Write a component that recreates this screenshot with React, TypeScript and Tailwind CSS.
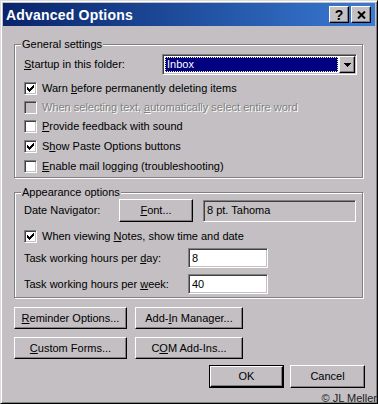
import React from "react";

const Check = () => (
  <svg width="7" height="7" viewBox="0 0 7 7" shapeRendering="crispEdges">
    {[2, 3, 4, 3, 2, 1, 0].map((y, x) => (
      <rect key={x} x={x} y={y} width="1" height="3" fill="#000" />
    ))}
  </svg>
);

const Box = ({ checked, disabled }: { checked?: boolean; disabled?: boolean }) => (
  <div
    className={`w-[13px] h-[13px] shrink-0 flex items-center justify-center border border-t-[#808080] border-l-[#808080] border-r-white border-b-white shadow-[inset_1px_1px_0_#404040,inset_-1px_-1px_0_#c3bfc3] ${
      disabled ? "bg-[#c3bfc3]" : "bg-white"
    }`}
  >
    {checked && <Check />}
  </div>
);

const CheckRow = ({
  checked,
  disabled,
  className,
  children,
}: {
  checked?: boolean;
  disabled?: boolean;
  className: string;
  children: React.ReactNode;
}) => (
  <div className={`flex items-center ${className}`}>
    <Box checked={checked} disabled={disabled} />
    <span
      className={`ml-[5px] whitespace-nowrap ${
        disabled ? "text-[#808080] [text-shadow:1px_1px_0_#fff]" : ""
      }`}
    >
      {children}
    </span>
  </div>
);

const Btn = ({ className, children }: { className: string; children: React.ReactNode }) => (
  <div
    className={`flex items-center justify-center whitespace-nowrap border border-t-white border-l-white border-r-black border-b-black shadow-[inset_-1px_-1px_0_#808080] ${className}`}
  >
    {children}
  </div>
);

const Sunken = ({ className, children }: { className: string; children?: React.ReactNode }) => (
  <div
    className={`flex items-center border border-t-[#808080] border-l-[#808080] border-r-white border-b-white shadow-[inset_1px_1px_0_#404040,inset_-1px_-1px_0_#c3bfc3] ${className}`}
  >
    {children}
  </div>
);

export default function App() {
  return (
    <div className="w-[378px] h-[404px] overflow-hidden bg-[#c3bfc3] font-['Liberation_Sans',Arial,sans-serif] text-[11px] leading-[13px] text-black">
      <div className="h-full border border-t-[#dcdcdc] border-l-[#dcdcdc] border-r-black border-b-black shadow-[inset_1px_1px_0_#fff,inset_-1px_-1px_0_#808080] p-[2px] flex flex-col">
        {/* Title bar */}
        <div className="h-[23px] shrink-0 flex items-center bg-linear-to-r from-[#0a246a] to-[#3a7bd5] pl-[3px] pr-[4px]">
          <span className="text-white font-bold text-[14px] leading-[16px] tracking-[0.2px]">Advanced Options</span>
          <div className="ml-auto flex gap-[2px]">
            <Btn className="w-[20px] h-[17px] bg-[#c3bfc3]">
              <span className="font-bold text-[14px] leading-[14px]">?</span>
            </Btn>
            <Btn className="w-[20px] h-[17px] bg-[#c3bfc3]">
              <svg width="9" height="8" viewBox="0 0 9 8">
                <path d="M1 0.5 L8 7.5 M8 0.5 L1 7.5" stroke="#000" strokeWidth="2" />
              </svg>
            </Btn>
          </div>
        </div>

        {/* Body */}
        <div className="flex-1 flex flex-col pl-[11px] pr-[10px]">
          {/* General settings */}
          <div className="mt-[18px] w-[349px] h-[134px] shrink-0 flex flex-col pl-[9px] border border-[#808080] shadow-[inset_1px_1px_0_#fff,1px_1px_0_#fff]">
            <span className="self-start -mt-[7px] -ml-[3px] px-[1px] h-[13px] bg-[#c3bfc3]">General settings</span>
            <div className="mt-[3px] h-[21px] flex items-center">
              <span className="w-[138px] whitespace-nowrap">
                <u>S</u>tartup in this folder:
              </span>
              <Sunken className="w-[195px] h-[21px] bg-white p-[1px]">
                <div className="flex-1 h-[15px] ml-[1px] bg-[#000080] border border-dotted border-[#f0f0c0] flex items-center">
                  <span className="text-white pl-[1px]">Inbox</span>
                </div>
                <Btn className="w-[16px] h-[17px] bg-[#c3bfc3] ml-[1px]">
                  <svg width="7" height="4" viewBox="0 0 7 4" shapeRendering="crispEdges">
                    <rect x="0" y="0" width="7" height="1" fill="#000" />
                    <rect x="1" y="1" width="5" height="1" fill="#000" />
                    <rect x="2" y="2" width="3" height="1" fill="#000" />
                    <rect x="3" y="3" width="1" height="1" fill="#000" />
                  </svg>
                </Btn>
              </Sunken>
            </div>
            <CheckRow checked className="mt-[3px] h-[20px]">
              Warn <u>b</u>efore permanently deleting items
            </CheckRow>
            <CheckRow disabled className="h-[19px]">
              When selecting text, <u>a</u>utomatically select entire word
            </CheckRow>
            <CheckRow className="h-[19px]">
              <u>P</u>rovide feedback with sound
            </CheckRow>
            <CheckRow checked className="h-[20px]">
              S<u>h</u>ow Paste Options buttons
            </CheckRow>
            <CheckRow className="h-[20px]">
              <u>E</u>nable mail logging (troubleshooting)
            </CheckRow>
          </div>

          {/* Appearance options */}
          <div className="mt-[14px] w-[349px] h-[106px] shrink-0 flex flex-col pl-[9px] border border-[#808080] shadow-[inset_1px_1px_0_#fff,1px_1px_0_#fff]">
            <span className="self-start -mt-[7px] -ml-[3px] px-[1px] h-[13px] bg-[#c3bfc3]">Appearance options</span>
            <div className="h-[23px] flex items-center">
              <span className="w-[95px] whitespace-nowrap">Date Navigator:</span>
              <Btn className="w-[74px] h-[23px]">
                <span>
                  <u>F</u>ont...
                </span>
              </Btn>
              <Sunken className="ml-[10px] w-[153px] h-[22px] pl-[3px]">8 pt. Tahoma</Sunken>
            </div>
            <CheckRow checked className="mt-[4px] h-[20px]">
              When viewing <u>N</u>otes, show time and date
            </CheckRow>
            <div className="mt-[2px] h-[20px] flex items-center">
              <span className="w-[164px] whitespace-nowrap">
                Task working hours per <u>d</u>ay:
              </span>
              <Sunken className="w-[80px] h-[20px] bg-white pl-[3px]">8</Sunken>
            </div>
            <div className="mt-[6px] h-[20px] flex items-center">
              <span className="w-[164px] whitespace-nowrap">
                Task working hours per <u>w</u>eek:
              </span>
              <Sunken className="w-[80px] h-[20px] bg-white pl-[3px]">40</Sunken>
            </div>
          </div>

          {/* Buttons */}
          <div className="mt-[9px] flex gap-[8px]">
            <Btn className="w-[113px] h-[22px]">
              <span>
                <u>R</u>eminder Options...
              </span>
            </Btn>
            <Btn className="w-[108px] h-[22px]">
              <span>
                Add-<u>I</u>n Manager...
              </span>
            </Btn>
          </div>
          <div className="mt-[8px] flex gap-[8px]">
            <Btn className="w-[113px] h-[22px]">
              <span>
                <u>C</u>ustom Forms...
              </span>
            </Btn>
            <Btn className="w-[108px] h-[22px]">
              <span>
                C<u>O</u>M Add-Ins...
              </span>
            </Btn>
          </div>
          <div className="mt-[6px] flex justify-end gap-[6px]">
            <div className="w-[75px] h-[23px] border border-black flex">
              <Btn className="flex-1">OK</Btn>
            </div>
            <Btn className="w-[75px] h-[23px]">Cancel</Btn>
          </div>
          <div className="mt-[4px] -mr-[12px] h-[12px] flex justify-end">
            <span className="leading-[12px] whitespace-nowrap text-[#202020]">© JL Meller</span>
          </div>
        </div>
      </div>
    </div>
  );
}
